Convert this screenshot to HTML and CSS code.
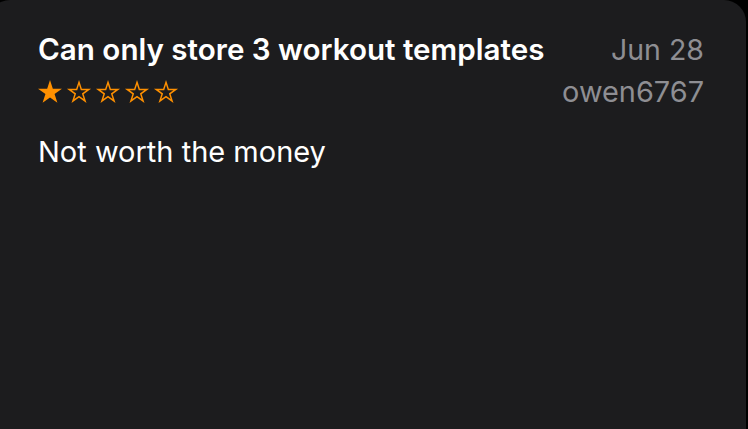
FILE: index.html
```html
<!DOCTYPE html>
<html lang="en">
<head>
    <meta charset="UTF-8">
    <meta name="viewport" content="width=device-width, initial-scale=1.0">
    <title>Review</title>
    <link rel="stylesheet" href="styles.css">
</head>
<body>
    <div class="card">
        <div class="review-head">
            <div class="review-main">
                <h2 class="review-title">Can only store 3 workout templates</h2>
                <div class="stars">
                    <svg class="star" viewBox="0 0 24 23"><polygon class="full" points="12,0 14.83,8.71 23.98,8.71 16.57,14.09 19.41,22.79 12,17.41 4.59,22.79 7.43,14.09 0.02,8.71 9.17,8.71"/></svg>
                    <svg class="star" viewBox="0 0 24 23"><polygon class="empty" transform="translate(12 12.6) scale(0.82) translate(-12 -12.6)" points="12,0 14.83,8.71 23.98,8.71 16.57,14.09 19.41,22.79 12,17.41 4.59,22.79 7.43,14.09 0.02,8.71 9.17,8.71"/></svg>
                    <svg class="star" viewBox="0 0 24 23"><polygon class="empty" transform="translate(12 12.6) scale(0.82) translate(-12 -12.6)" points="12,0 14.83,8.71 23.98,8.71 16.57,14.09 19.41,22.79 12,17.41 4.59,22.79 7.43,14.09 0.02,8.71 9.17,8.71"/></svg>
                    <svg class="star" viewBox="0 0 24 23"><polygon class="empty" transform="translate(12 12.6) scale(0.82) translate(-12 -12.6)" points="12,0 14.83,8.71 23.98,8.71 16.57,14.09 19.41,22.79 12,17.41 4.59,22.79 7.43,14.09 0.02,8.71 9.17,8.71"/></svg>
                    <svg class="star" viewBox="0 0 24 23"><polygon class="empty" transform="translate(12 12.6) scale(0.82) translate(-12 -12.6)" points="12,0 14.83,8.71 23.98,8.71 16.57,14.09 19.41,22.79 12,17.41 4.59,22.79 7.43,14.09 0.02,8.71 9.17,8.71"/></svg>
                </div>
            </div>
            <div class="review-meta">
                <span class="review-date">Jun 28</span>
                <span class="review-author">owen6767</span>
            </div>
        </div>
        <p class="review-body">Not worth the money</p>
    </div>
</body>
</html>
```

FILE: styles.css
```css
:root {
    --card-color: #1c1c1e;
    --text-color: #ffffff;
    --muted-color: #8e8e93;
    --star-color: #ff9000;
}
body {
    margin: 0;
    padding: 0;
    background-color: #000;
    font-family: Inter, 'Noto Sans', sans-serif;
    color: var(--text-color);
    overflow: hidden;
}
.card {
    box-sizing: border-box;
    height: 429px;
    width: 758px;
    margin-left: -12px;
    padding: 31px 42px 0 50px;
    background-color: var(--card-color);
    border-radius: 22px 22px 0 0;
}
.review-head {
    display: flex;
    justify-content: space-between;
    align-items: flex-start;
}
.review-title {
    margin: 0;
    font-size: 29.6px;
    font-weight: 600;
    line-height: 36px;
}
.stars {
    display: flex;
    gap: 5px;
    margin-top: 13px;
}
.star {
    width: 24px;
    height: 23px;
    overflow: visible;
}
.star .full {
    fill: var(--star-color);
}
.star .empty {
    fill: none;
    stroke: var(--star-color);
    stroke-width: 1.8;
    stroke-linejoin: miter;
}
.review-meta {
    display: flex;
    flex-direction: column;
    align-items: flex-end;
    margin-top: -2px;
    color: var(--muted-color);
    font-size: 28.5px;
    line-height: 42px;
}
.review-author {
    font-size: 28.9px;
}
.review-body {
    margin: 21px 0 0;
    font-size: 29px;
    line-height: 36px;
}
```
